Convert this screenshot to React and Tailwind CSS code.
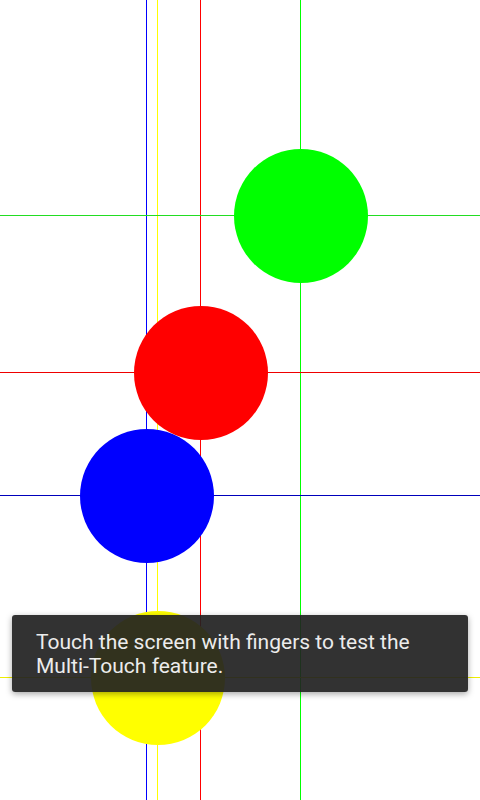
export default function App() {
  return (
    <div className="relative w-[480px] h-[800px] bg-white overflow-hidden font-['Roboto','Noto_Sans',sans-serif]">
      {/* vertical guide lines */}
      <div className="absolute top-0 left-[146px] h-[800px] w-px bg-[#0000ff]" />
      <div className="absolute top-0 left-[157px] h-[800px] w-px bg-[#ffff00]" />
      <div className="absolute top-0 left-[200px] h-[800px] w-px bg-[#ff0000]" />
      <div className="absolute top-0 left-[300px] h-[800px] w-px bg-[#00ff00]" />
      {/* horizontal guide lines */}
      <div className="absolute left-0 top-[215px] w-[480px] h-px bg-[#22dd22]" />
      <div className="absolute left-0 top-[372px] w-[480px] h-px bg-[#ee0000]" />
      <div className="absolute left-0 top-[495px] w-[480px] h-px bg-[#0000bb]" />
      <div className="absolute left-0 top-[677px] w-[480px] h-px bg-[#eeee00]" />
      {/* touch points */}
      <div className="absolute left-[233.5px] top-[148.5px] w-[134px] h-[134px] rounded-full bg-[#00ff00]" />
      <div className="absolute left-[133.5px] top-[305.5px] w-[134px] h-[134px] rounded-full bg-[#ff0000]" />
      <div className="absolute left-[79.5px] top-[428.5px] w-[134px] h-[134px] rounded-full bg-[#0000ff]" />
      <div className="absolute left-[90.5px] top-[610.5px] w-[134px] h-[134px] rounded-full bg-[#ffff00]" />
      {/* toast */}
      <div className="absolute left-[12px] top-[615px] w-[456px] h-[77px] rounded-[3px] bg-[rgba(33,33,33,0.92)] shadow-[0_2px_6px_rgba(0,0,0,0.35)] pl-[24px] pt-[15px] text-[21px] leading-[24px] text-[#ececec]">
        Touch the screen with fingers to test the
        <br />
        Multi-Touch feature.
      </div>
    </div>
  );
}
